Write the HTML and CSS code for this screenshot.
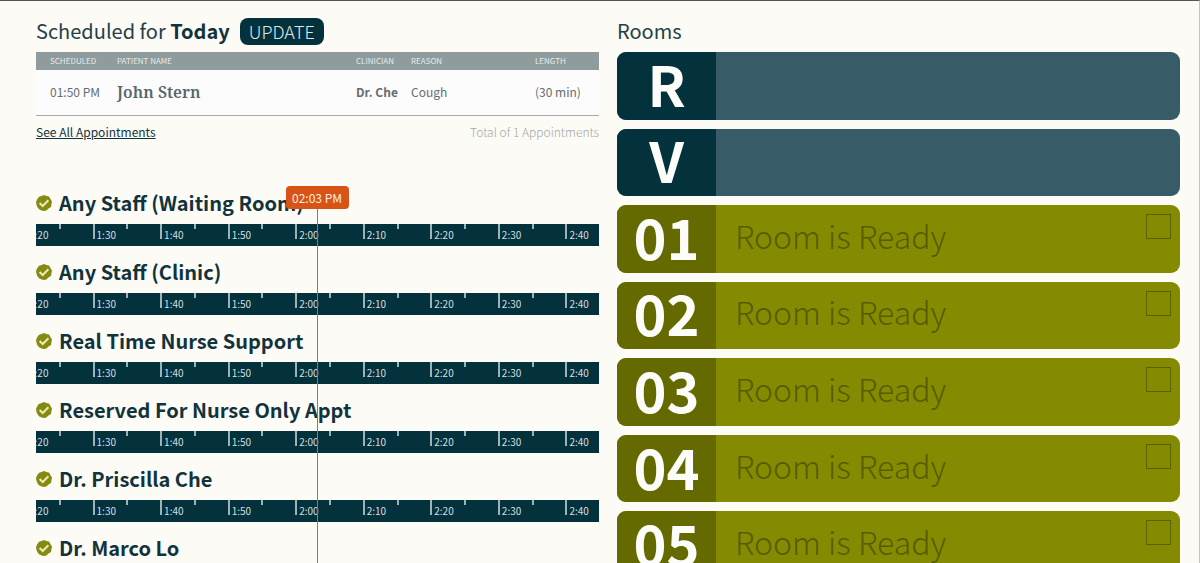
FILE: index.html
```html
<!DOCTYPE html>
<html lang="en">
<head>
<meta charset="utf-8">
<meta name="viewport" content="width=device-width, initial-scale=1">
<title>Clinic schedule</title>
<link rel="stylesheet" href="styles.css">
</head>
<body>
<svg class="sprite" aria-hidden="true">
  <symbol id="check" viewBox="0 0 16 16">
    <path class="badge-shape" d="M8 0 L10.4 1 L13 1.6 L14.4 4 L16 6.500 L15.500 9 L15 12 L12.500 13.600 L10.400 15.400 L8 16 L5.600 15.400 L3 14.200 L1.300 12 L.4 9.400 L0 7 L1.200 4.200 L3 1.700 L5.600 1 Z"/>
    <path class="badge-tick" d="M3.600 8 L6.700 11 L12.400 5.200"/>
  </symbol>
</svg>
<main class="board">
  <section class="column">
    <header class="title-row">
      <h1 class="title">Scheduled for <strong>Today</strong></h1>
      <button class="update" type="button">UPDATE</button>
    </header>
    <table class="appointments">
      <thead>
        <tr><th class="col-time">SCHEDULED</th><th class="col-name">PATIENT NAME</th><th class="col-clinician">CLINICIAN</th><th class="col-reason">REASON</th><th class="col-length">LENGTH</th></tr>
      </thead>
      <tbody>
        <tr><td>01:50 PM</td><td class="patient">John Stern</td><td class="clinician">Dr. Che</td><td>Cough</td><td>(30 min)</td></tr>
      </tbody>
    </table>
    <div class="summary"><a class="see-all" href="#all">See All Appointments</a><span class="total">Total of 1 Appointments</span></div>

    <div class="timelines">
      <div class="now"><time class="now-label">02:03 PM</time></div>
      <section class="staff">
        <h2 class="staff-name"><svg class="badge"><use href="#check"/></svg>Any Staff (Waiting Room)</h2>
        <ol class="ruler"><li>1:20</li><li>1:30</li><li>1:40</li><li>1:50</li><li>2:00</li><li>2:10</li><li>2:20</li><li>2:30</li><li>2:40</li></ol>
      </section>
      <section class="staff">
        <h2 class="staff-name"><svg class="badge"><use href="#check"/></svg>Any Staff (Clinic)</h2>
        <ol class="ruler"><li>1:20</li><li>1:30</li><li>1:40</li><li>1:50</li><li>2:00</li><li>2:10</li><li>2:20</li><li>2:30</li><li>2:40</li></ol>
      </section>
      <section class="staff">
        <h2 class="staff-name"><svg class="badge"><use href="#check"/></svg>Real Time Nurse Support</h2>
        <ol class="ruler"><li>1:20</li><li>1:30</li><li>1:40</li><li>1:50</li><li>2:00</li><li>2:10</li><li>2:20</li><li>2:30</li><li>2:40</li></ol>
      </section>
      <section class="staff">
        <h2 class="staff-name"><svg class="badge"><use href="#check"/></svg>Reserved For Nurse Only Appt</h2>
        <ol class="ruler"><li>1:20</li><li>1:30</li><li>1:40</li><li>1:50</li><li>2:00</li><li>2:10</li><li>2:20</li><li>2:30</li><li>2:40</li></ol>
      </section>
      <section class="staff">
        <h2 class="staff-name"><svg class="badge"><use href="#check"/></svg>Dr. Priscilla Che</h2>
        <ol class="ruler"><li>1:20</li><li>1:30</li><li>1:40</li><li>1:50</li><li>2:00</li><li>2:10</li><li>2:20</li><li>2:30</li><li>2:40</li></ol>
      </section>
      <section class="staff">
        <h2 class="staff-name"><svg class="badge"><use href="#check"/></svg>Dr. Marco Lo</h2>
      </section>
    </div>
  </section>

  <section class="column">
    <header class="title-row"><h1 class="title">Rooms</h1></header>
    <div class="rooms">
      <article class="room room-blue"><h2 class="room-id">R</h2></article>
      <article class="room room-blue"><h2 class="room-id">V</h2></article>
      <article class="room"><h2 class="room-id">01</h2><label class="room-status" for="room1">Room is Ready</label><input class="room-check" id="room1" type="checkbox"></article>
      <article class="room"><h2 class="room-id">02</h2><label class="room-status" for="room2">Room is Ready</label><input class="room-check" id="room2" type="checkbox"></article>
      <article class="room"><h2 class="room-id">03</h2><label class="room-status" for="room3">Room is Ready</label><input class="room-check" id="room3" type="checkbox"></article>
      <article class="room"><h2 class="room-id">04</h2><label class="room-status" for="room4">Room is Ready</label><input class="room-check" id="room4" type="checkbox"></article>
      <article class="room"><h2 class="room-id">05</h2><label class="room-status" for="room5">Room is Ready</label><input class="room-check" id="room5" type="checkbox"></article>
    </div>
  </section>
</main>
</body>
</html>
```
FILE: styles.css
```css
* { box-sizing: border-box; }

html { scrollbar-width: none; }

body {
  margin: 0;
  background: #fcfbf6;
  color: #12333c;
  font-family: "Noto Sans CJK SC", "Noto Sans", sans-serif;
}

h1, h2, ol { margin: 0; padding: 0; }

.sprite { position: absolute; width: 0; height: 0; }
.badge-shape { fill: #858b10; }
.badge-tick { fill: none; stroke: #f3e6b8; stroke-width: 2; }

.board {
  display: grid;
  grid-template-columns: 1fr 1fr;
  gap: 18px;
  align-items: start;
  min-height: 100vh;
  padding: 16px 19px 0 36px;
  border-top: 1px solid #58535a;
  border-right: 1px solid #a5dca5;
}

.column { min-width: 0; }

.title-row {
  display: flex;
  align-items: center;
  gap: 10px;
  height: 29px;
  margin-bottom: 6px;
}

.title {
  padding-bottom: 2px;
  font-size: 20px;
  font-weight: 400;
  line-height: 28px;
  color: #263f46;
}
.title strong { font-weight: 700; color: #12333c; }

.update {
  height: 27px;
  padding: 0 9px;
  border: 0;
  border-radius: 8px;
  background: #03323c;
  color: #dde9ec;
  font: 300 18px/27px "Noto Sans CJK SC", "Noto Sans", sans-serif;
}

.appointments {
  width: 100%;
  border-collapse: collapse;
  table-layout: fixed;
  border-bottom: 1px solid #a5a8a8;
  background: #fcfcfc;
  font-size: 12px;
  color: #666d6f;
}
.appointments th {
  height: 18px;
  padding: 0;
  background: #8f9b9c;
  color: #e6ebeb;
  font-size: 8px;
  line-height: 18px;
  font-weight: 400;
  text-align: left;
}
.appointments td { height: 45px; padding: 0; line-height: 20px; }
.appointments th:first-child, .appointments td:first-child { padding-left: 14px; }
.col-time { width: 81px; }
.col-clinician { width: 55px; }
.col-reason { width: 124px; }
.col-length { width: 64px; }
.appointments .patient {
  font-family: "Noto Serif", "DejaVu Serif Condensed", "DejaVu Serif", serif;
  font-size: 16px;
  font-weight: 600;
  color: #56666a;
}
.appointments .clinician { font-weight: 700; }

.summary {
  display: flex;
  justify-content: space-between;
  padding-top: 6px;
  font-size: 12px;
  line-height: 20px;
}
.see-all { color: #12333c; }
.total { color: #a8a8a4; font-weight: 300; }

.timelines {
  position: relative;
  margin-top: 47px;
  min-height: 374px;
}

.staff { height: 69px; }

.staff-name {
  display: flex;
  align-items: center;
  gap: 7px;
  height: 28px;
  margin-bottom: 7px;
  font-size: 20px;
  line-height: 28px;
  font-weight: 700;
}
.badge { flex: none; width: 16px; height: 16px; }

.ruler {
  display: flex;
  height: 22px;
  overflow: hidden;
  background: #03323c;
  list-style: none;
}
.ruler li {
  position: relative;
  flex: none;
  width: 12%;
  padding-left: 4px;
  color: #d3dfe2;
  font-size: 10px;
  line-height: 22px;
}
.ruler li:first-child { margin-left: -11px; }
.ruler li::before, .ruler li::after {
  content: "";
  position: absolute;
  top: 0;
  left: 0;
  width: 2px;
  height: 15px;
  background: #9fb2b7;
}
.ruler li::after { left: 50%; height: 5px; }

.now {
  position: absolute;
  z-index: 1;
  top: -3px;
  bottom: 0;
  left: 50%;
  width: 63px;
  margin-left: -32px;
  background: linear-gradient(#7c7f7e, #7c7f7e) center / 1px 100% no-repeat;
}
.now-label {
  display: block;
  border-radius: 4px;
  background: #d85416;
  color: #fbeee4;
  font-size: 12px;
  line-height: 23px;
  text-align: center;
}

.rooms { display: grid; gap: 9px; }

.room {
  display: flex;
  aspect-ratio: 25 / 3;
  min-height: 60px;
  overflow: hidden;
  border-radius: 9px;
  background: #858b00;
}
.room-blue { background: #385b68; }

.room-id {
  display: grid;
  place-items: center;
  flex: none;
  width: 99px;
  padding-bottom: 6px;
  background: #646900;
  color: #fcfcf8;
  font-size: 56px;
  line-height: 56px;
  font-weight: 700;
}
.room-blue .room-id { background: #03323c; }

.room-status {
  flex: 1;
  align-self: center;
  padding: 0 0 8px 19px;
  color: #575c00;
  font-size: 32px;
  line-height: 48px;
  font-weight: 200;
}

.room-check {
  appearance: none;
  width: 25px;
  height: 25px;
  margin: 9px 9px 0 0;
  border: 1px solid #5c6100;
}
```
